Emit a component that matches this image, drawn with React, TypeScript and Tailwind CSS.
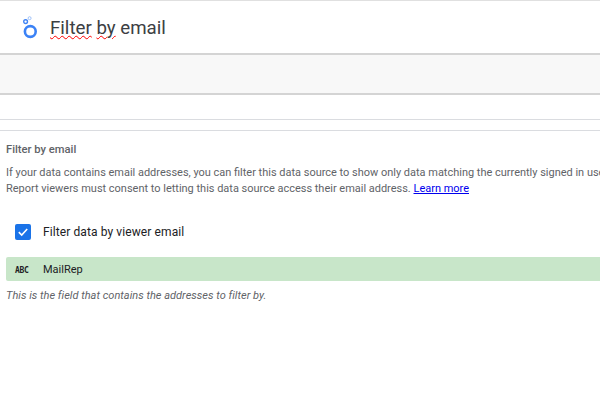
export default function App() {
  return (
    <div className="w-[600px] h-[400px] overflow-hidden bg-white flex flex-col font-['Roboto',sans-serif]">
      <header className="h-[55px] shrink-0 border-t border-t-[#e0e0e0] border-b-2 border-b-[#d4d4d4] flex items-center pl-[22px]">
        <svg width="16" height="24" viewBox="0 0 16 24" fill="none" className="mt-[2px] -mr-[1px]">
          <circle cx="8.3" cy="15.5" r="5.4" stroke="#3b82f6" strokeWidth="2.6" />
          <circle cx="3.6" cy="5.6" r="1.9" stroke="#4285f4" strokeWidth="1.4" />
          <circle cx="7.6" cy="2.2" r="1.5" stroke="#8ab4f8" strokeWidth="0.8" />
        </svg>
        <span className="ml-[13px] mt-[2px] text-[18.7px] leading-[24px] text-[#3c4043]">
          <span className="underline decoration-wavy decoration-[#ff0000] decoration-1">Filter</span>{" "}
          <span className="underline decoration-wavy decoration-[#ff0000] decoration-1">by</span> email
        </span>
      </header>
      <div className="h-[40px] shrink-0 bg-[#f8f8f8] border-b-2 border-b-[#d4d4d4]" />
      <div className="h-[25px] shrink-0 border-b border-b-[#dadce0]" />
      <div className="h-[11px] shrink-0 border-b border-b-[#dadce0]" />
      <main className="pt-[11px] flex flex-col">
        <h2 className="pl-[6px] text-[11.2px] leading-[16px] font-medium text-[#5f6368]">Filter by email</h2>
        <p className="pl-[6px] mt-[7px] text-[10.97px] leading-[16px] text-[#5f6368] whitespace-nowrap">
          If your data contains email addresses, you can filter this data source to show only data matching the currently signed in user.
          <br />
          Report viewers must consent to letting this data source access their email address.{" "}
          <a className="text-[#0000ee] underline">Learn more</a>
        </p>
        <label className="mt-[25px] ml-[15px] flex items-center h-[20px] gap-[12px]">
          <span className="w-[16px] h-[16px] rounded-[2px] bg-[#1a73e8] flex items-center justify-center">
            <svg width="14" height="14" viewBox="0 0 14 14" fill="none">
              <path d="M2.8 7.2 L5.7 10 L11.2 4" stroke="white" strokeWidth="1.6" />
            </svg>
          </span>
          <span className="text-[12px] text-[#202124] tracking-[0.1px]">Filter data by viewer email</span>
        </label>
        <div className="mt-[15px] ml-[6px] h-[24px] bg-[#c8e6c9] rounded-l-[2px] flex items-center">
          <span className="w-[37px] pl-[9px] mt-[3px] text-[8px] font-bold text-[#202124] font-['DejaVu_Sans_Mono',monospace] tracking-[-0.3px]">ABC</span>
          <span className="text-[11px] leading-[16px] mt-[1px] text-[#202124]">MailRep</span>
        </div>
        <p className="pl-[6px] mt-[7px] text-[11px] leading-[16px] italic text-[#5f6368] tracking-[0.02px]">This is the field that contains the addresses to filter by.</p>
      </main>
    </div>
  );
}
